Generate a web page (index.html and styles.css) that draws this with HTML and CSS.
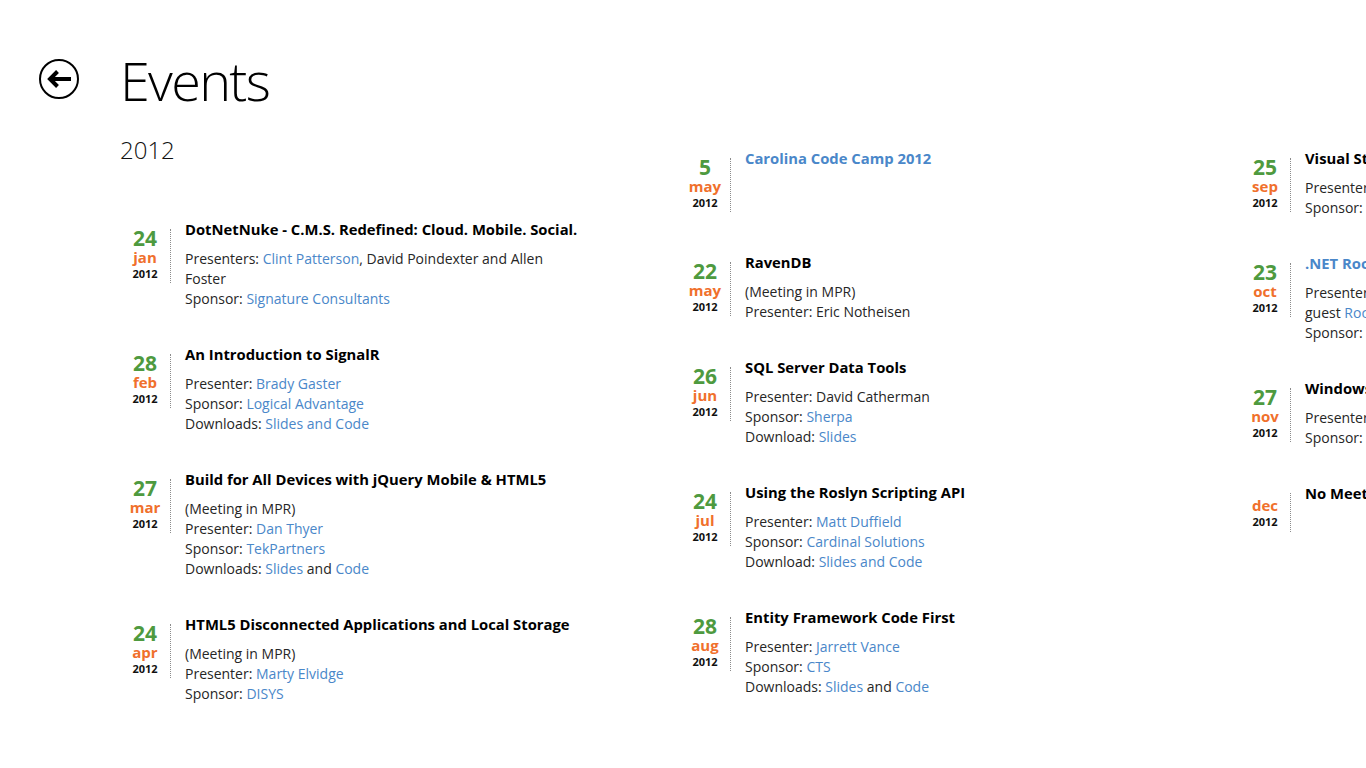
FILE: index.html
```html
<!DOCTYPE html>
<html lang="en">
<head>
<meta charset="utf-8">
<title>Events</title>
<link rel="stylesheet" href="styles.css">
</head>
<body>
<header class="header">
  <button class="back" aria-label="Back">
    <svg width="40" height="40" viewBox="0 0 40 40">
      <circle cx="20" cy="20" r="19" fill="none" stroke="#000" stroke-width="2"/>
      <path d="M11 20 H32" stroke="#000" stroke-width="4" fill="none"/>
      <path d="M18.5 12.5 L11 20 L18.5 27.5" stroke="#000" stroke-width="4" fill="none" stroke-linejoin="miter"/>
    </svg>
  </button>
  <h1 class="page-title">Events</h1>
</header>

<main class="columns">
  <section class="column first">
    <h2 class="group-title">2012</h2>

    <article class="event">
      <div class="date"><div class="day">24</div><div class="mon">jan</div><div class="yr">2012</div></div>
      <div class="info">
        <h3 class="title">DotNetNuke - C.M.S. Redefined: Cloud. Mobile. Social.</h3>
        <p class="desc">Presenters: <a href="#">Clint Patterson</a>, David Poindexter and Allen Foster</p>
        <p class="desc">Sponsor: <a href="#">Signature Consultants</a></p>
      </div>
    </article>

    <article class="event">
      <div class="date"><div class="day">28</div><div class="mon">feb</div><div class="yr">2012</div></div>
      <div class="info">
        <h3 class="title">An Introduction to SignalR</h3>
        <p class="desc">Presenter: <a href="#">Brady Gaster</a></p>
        <p class="desc">Sponsor: <a href="#">Logical Advantage</a></p>
        <p class="desc">Downloads: <a href="#">Slides and Code</a></p>
      </div>
    </article>

    <article class="event">
      <div class="date"><div class="day">27</div><div class="mon">mar</div><div class="yr">2012</div></div>
      <div class="info">
        <h3 class="title">Build for All Devices with jQuery Mobile &amp; HTML5</h3>
        <p class="desc">(Meeting in MPR)</p>
        <p class="desc">Presenter: <a href="#">Dan Thyer</a></p>
        <p class="desc">Sponsor: <a href="#">TekPartners</a></p>
        <p class="desc">Downloads: <a href="#">Slides</a> and <a href="#">Code</a></p>
      </div>
    </article>

    <article class="event">
      <div class="date"><div class="day">24</div><div class="mon">apr</div><div class="yr">2012</div></div>
      <div class="info">
        <h3 class="title">HTML5 Disconnected Applications and Local Storage</h3>
        <p class="desc">(Meeting in MPR)</p>
        <p class="desc">Presenter: <a href="#">Marty Elvidge</a></p>
        <p class="desc">Sponsor: <a href="#">DISYS</a></p>
      </div>
    </article>
  </section>

  <section class="column">
    <article class="event">
      <div class="date"><div class="day">5</div><div class="mon">may</div><div class="yr">2012</div></div>
      <div class="info">
        <h3 class="title"><a href="#">Carolina Code Camp 2012</a></h3>
      </div>
    </article>

    <article class="event">
      <div class="date"><div class="day">22</div><div class="mon">may</div><div class="yr">2012</div></div>
      <div class="info">
        <h3 class="title">RavenDB</h3>
        <p class="desc">(Meeting in MPR)</p>
        <p class="desc">Presenter: Eric Notheisen</p>
      </div>
    </article>

    <article class="event">
      <div class="date"><div class="day">26</div><div class="mon">jun</div><div class="yr">2012</div></div>
      <div class="info">
        <h3 class="title">SQL Server Data Tools</h3>
        <p class="desc">Presenter: David Catherman</p>
        <p class="desc">Sponsor: <a href="#">Sherpa</a></p>
        <p class="desc">Download: <a href="#">Slides</a></p>
      </div>
    </article>

    <article class="event">
      <div class="date"><div class="day">24</div><div class="mon">jul</div><div class="yr">2012</div></div>
      <div class="info">
        <h3 class="title">Using the Roslyn Scripting API</h3>
        <p class="desc">Presenter: <a href="#">Matt Duffield</a></p>
        <p class="desc">Sponsor: <a href="#">Cardinal Solutions</a></p>
        <p class="desc">Download: <a href="#">Slides and Code</a></p>
      </div>
    </article>

    <article class="event">
      <div class="date"><div class="day">28</div><div class="mon">aug</div><div class="yr">2012</div></div>
      <div class="info">
        <h3 class="title">Entity Framework Code First</h3>
        <p class="desc">Presenter: <a href="#">Jarrett Vance</a></p>
        <p class="desc">Sponsor: <a href="#">CTS</a></p>
        <p class="desc">Downloads: <a href="#">Slides</a> and <a href="#">Code</a></p>
      </div>
    </article>
  </section>

  <section class="column">
    <article class="event">
      <div class="date"><div class="day">25</div><div class="mon">sep</div><div class="yr">2012</div></div>
      <div class="info">
        <h3 class="title">Visual Studio 2012</h3>
        <p class="desc">Presenter: <a href="#">Brian Noyes</a></p>
        <p class="desc">Sponsor: <a href="#">Microsoft</a></p>
      </div>
    </article>

    <article class="event">
      <div class="date"><div class="day">23</div><div class="mon">oct</div><div class="yr">2012</div></div>
      <div class="info">
        <h3 class="title"><a href="#">.NET Rocks! Road Trip</a></h3>
        <p class="desc">Presenters: Carl Franklin &amp; Richard Campbell with special guest <a href="#">Rocky Lhotka</a></p>
        <p class="desc">Sponsor: <a href="#">Microsoft</a></p>
      </div>
    </article>

    <article class="event">
      <div class="date"><div class="day">27</div><div class="mon">nov</div><div class="yr">2012</div></div>
      <div class="info">
        <h3 class="title">Windows 8 Apps with XAML</h3>
        <p class="desc">Presenter: <a href="#">Jeremy Likness</a></p>
        <p class="desc">Sponsor: <a href="#">Wintellect</a></p>
      </div>
    </article>

    <article class="event">
      <div class="date noday"><div class="day"></div><div class="mon">dec</div><div class="yr">2012</div></div>
      <div class="info">
        <h3 class="title">No Meeting</h3>
      </div>
    </article>
  </section>
</main>
</body>
</html>
```

FILE: styles.css
```css
html, body {
  margin: 0;
  padding: 0;
  background: #fff;
  overflow: hidden;
  width: 1366px;
  height: 768px;
}

body {
  font-family: "Open Sans", "Noto Sans", "Liberation Sans", sans-serif;
  color: #222;
}

.header {
  display: flex;
  align-items: flex-start;
  padding-top: 53px;
}

.back {
  margin: 6px 0 0 39px;
  padding: 0;
  width: 40px;
  height: 40px;
  border: 0;
  background: none;
  flex: none;
}

.back svg {
  display: block;
}

.page-title {
  margin: 0 0 0 41px;
  font-size: 54px;
  font-weight: 300;
  line-height: 54px;
  color: #000;
  letter-spacing: -1.7px;
}

.columns {
  display: flex;
  align-items: flex-start;
  margin-top: 24px;
  padding-left: 120px;
}

.column {
  flex: none;
  width: 560px;
  padding-top: 17px;
  display: flex;
  flex-direction: column;
  gap: 35px;
}

.column.first {
  padding-top: 0;
  gap: 0;
}

.column.first .event + .event {
  margin-top: 35px;
}

.group-title {
  margin: 0 0 50px 0;
  font-size: 24px;
  font-weight: 300;
  line-height: 38px;
  color: #111;
}

.event {
  display: flex;
  align-items: flex-start;
}

.date {
  flex: none;
  width: 50px;
  margin: 10px 0 5px 0;
  padding-bottom: 1px;
  border-right: 1px dotted #8c8c8c;
  text-align: center;
  font-weight: 700;
}

.date.noday {
  padding-top: 3px;
  padding-bottom: 2px;
}

.day {
  font-size: 21px;
  line-height: 19px;
  color: #4e9a3f;
}

.noday .day {
  display: none;
}

.mon {
  font-size: 15px;
  line-height: 18px;
  color: #f0702c;
}

.yr {
  font-size: 11px;
  line-height: 16px;
  color: #111;
}

.info {
  margin-left: 14px;
  width: 395px;
}

.title {
  margin: 0 0 10px 0;
  font-size: 14.8px;
  font-weight: 700;
  line-height: 20px;
  color: #000;
  white-space: nowrap;
}

.desc {
  margin: 0;
  font-size: 14px;
  line-height: 20px;
  color: #262626;
}

a {
  color: #4a87c9;
  text-decoration: none;
}
```
